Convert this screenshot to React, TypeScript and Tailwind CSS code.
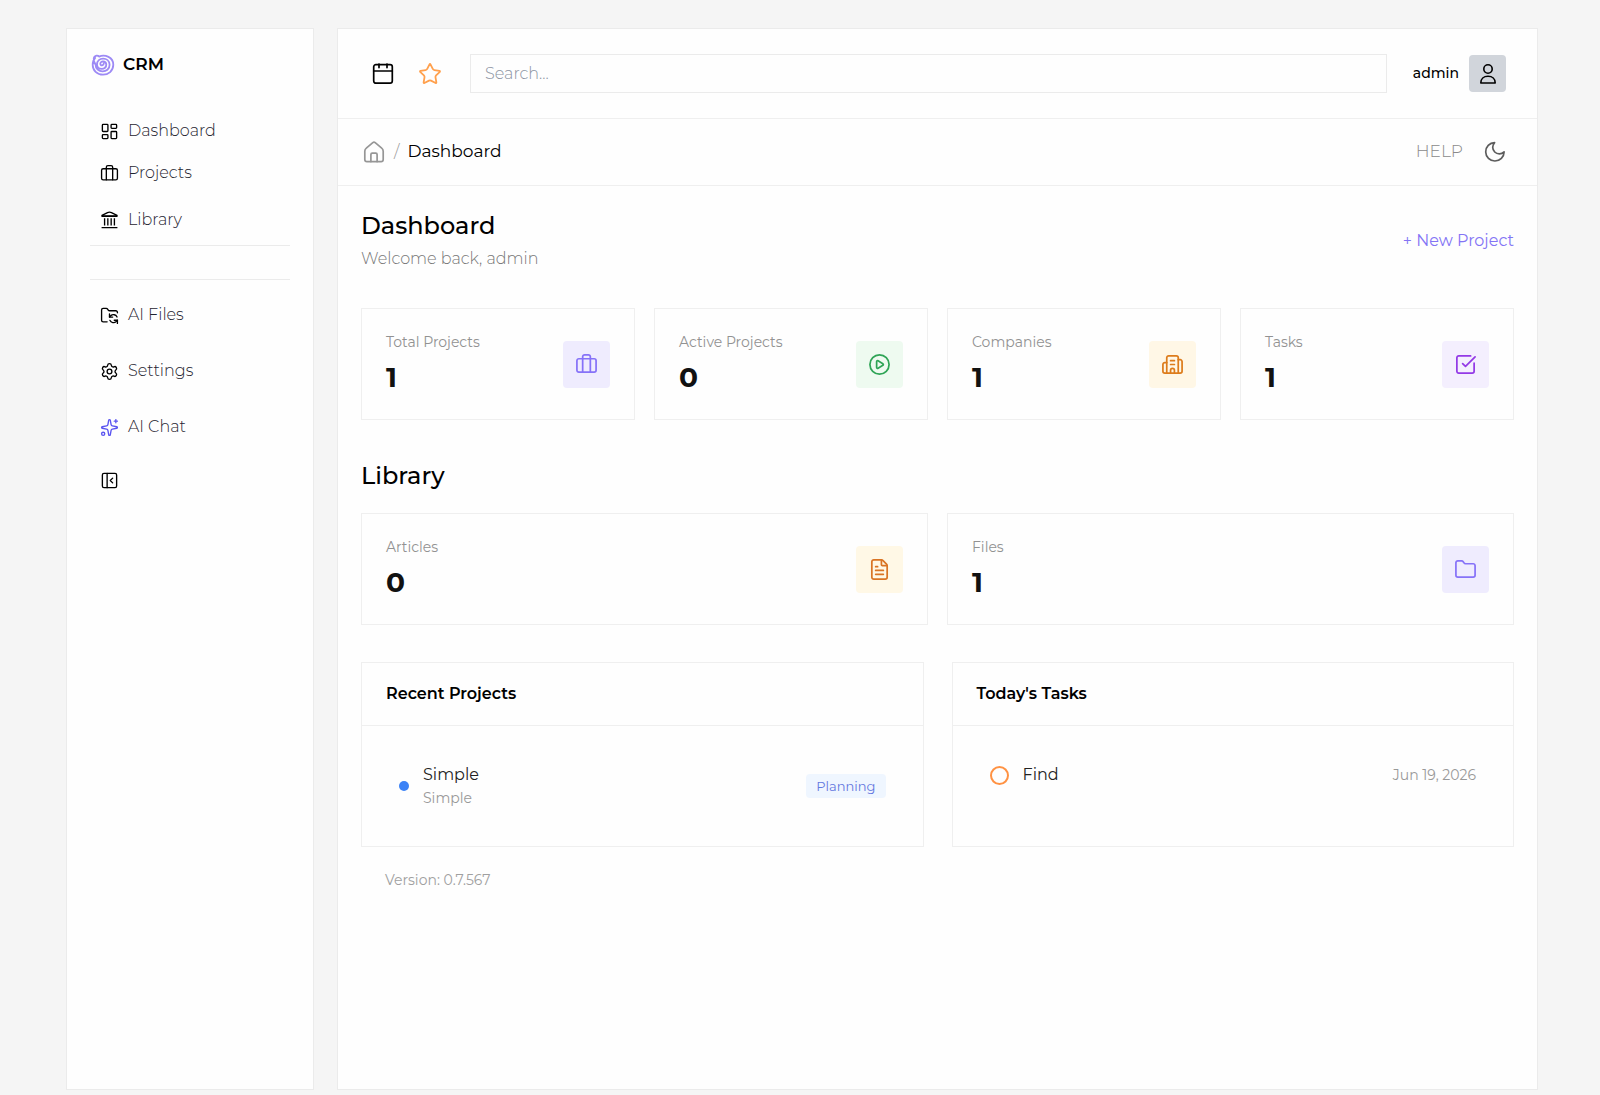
import type { ReactNode } from 'react';
import {
  Briefcase,
  Building2,
  CirclePlay,
  FileText,
  Folder,
  FolderSync,
  LayoutDashboard,
  PanelLeftClose,
  Settings,
  Sparkles,
  SquareCheckBig,
  Star,
} from 'lucide-react';

function SpiralLogo() {
  return (
    <svg viewBox="0 0 24 24" className="size-6 text-[#9d8af5]" fill="none" stroke="currentColor" strokeWidth="1.8" strokeLinecap="round" strokeLinejoin="round" aria-hidden="true">
      <path d="M12.8 10.500C12.800 12.500 9.600 13.200 9.300 11C9 7.800 14.800 7.400 15.300 11.300C15.600 17.300 6.300 17.600 6 11.500C5.800 3.600 18.300 3.600 18.600 11.700C18.600 20.800 4.400 20.300 4.600 11.500" />
      <path d="M4.6 11.500C1.500 7 2.400 3.200 5.600 2.600C6.800 2.500 7.600 3 8 3.600C14 .8 22.400 4.500 22.300 11.800C22.200 18 17.500 21.700 12 21.700C6 21.700 1.700 17.400 1.700 12C1.700 9 2.500 6.600 4.200 4.900" />
    </svg>
  );
}

function BankIcon() {
  return (
    <svg viewBox="0 0 24 24" className="size-[19px]" fill="none" stroke="currentColor" strokeWidth="1.7" strokeLinejoin="round" aria-hidden="true">
      <path d="M2.5 6.8 9.5 3.2Q12 2 14.5 3.2L21.5 6.8V8H2.5Z" />
      <path d="M2.5 7.4h19M5.8 10.500v9M9.900 10.500v9M14.100 10.500v9M18.200 10.500v9M2 22.300h20" />
    </svg>
  );
}

function CalendarIcon() {
  return (
    <svg viewBox="0 0 24 24" className="size-6" fill="none" stroke="currentColor" strokeWidth="1.7" strokeLinecap="round" strokeLinejoin="round" aria-hidden="true">
      <rect x="2.7" y="2.6" width="18.6" height="18.6" rx="2.2" />
      <path d="M2.7 9h18.600M8 2v3.600M16 2v3.600" />
    </svg>
  );
}

function HomeIcon() {
  return (
    <svg viewBox="0 0 24 24" className="size-6 text-[#969696]" fill="none" stroke="currentColor" strokeWidth="1.7" strokeLinecap="round" strokeLinejoin="round" aria-hidden="true">
      <path d="M2.800 11.200c0-1.300.5-2.200 1.500-3L10.800 2.600c.8-.7 1.600-.7 2.400 0l6.500 5.600c1 .8 1.500 1.700 1.500 3v8.300c0 1.300-.8 2.100-2.100 2.100H4.900c-1.300 0-2.100-.8-2.100-2.100Z" />
      <path d="M8.900 21.600v-7.200c0-.8.500-1.300 1.300-1.300h3.600c.8 0 1.300.5 1.300 1.300v7.200" />
    </svg>
  );
}

function MoonIcon() {
  return (
    <svg viewBox="0 0 24 24" className="size-6 text-[#5c5c5c]" fill="none" stroke="currentColor" strokeWidth="1.7" strokeLinecap="round" strokeLinejoin="round" aria-hidden="true">
      <path d="M11.600 2.600a6.400 6.400 0 0 0 9.500 9.300 9.200 9.200 0 1 1-9.500-9.300Z" />
    </svg>
  );
}

function PersonIcon() {
  return (
    <svg viewBox="0 0 24 24" className="size-6" fill="none" stroke="currentColor" strokeWidth="1.6" strokeLinecap="round" strokeLinejoin="round" aria-hidden="true">
      <circle cx="12" cy="7" r="4.200" />
      <path d="M4.800 21c0-4 2.900-6.700 7.200-6.700s7.200 2.700 7.200 6.700Z" />
    </svg>
  );
}

function NavLink({ icon, label, className }: { icon: ReactNode; label: string; className: string }) {
  return (
    <a href="#" className={`flex items-center gap-[9px] px-[10px] text-[16px] font-light text-[#1f2430] ${className}`}>
      <span className="text-black">{icon}</span>
      {label}
    </a>
  );
}

function StatCard({ label, value, icon, tone }: { label: string; value: number; icon: ReactNode; tone: string }) {
  return (
    <div className="flex items-center justify-between border border-[#efefef] px-6 py-[23px]">
      <div>
        <p className="mb-[9px] text-[14px] leading-5 text-[#929292]">{label}</p>
        <p className="mb-[3px] text-[28px] leading-8 font-bold text-[#111]">{value}</p>
      </div>
      <div className={`flex size-[47px] items-center justify-center rounded ${tone}`}>{icon}</div>
    </div>
  );
}

function Panel({ title, children }: { title: string; children: ReactNode }) {
  return (
    <section className="border border-[#efefef]">
      <h3 className="border-b border-[#efefef] px-6 py-[19px] text-[16px] leading-6 font-semibold text-black">{title}</h3>
      <div className="p-[37px]">{children}</div>
    </section>
  );
}

export default function App() {
  return (
    <div className="flex min-h-screen gap-[23px] bg-[#f5f5f5] pt-7 pr-[62px] pb-[5px] pl-[66px] font-[Montserrat,Inter,sans-serif] text-black">
      <aside className="w-[248px] shrink-0 border border-[#ebebeb] bg-[#fefefe] px-[23px] pt-6">
        <div className="flex h-6 items-center gap-2 pl-px">
          <SpiralLogo />
          <span className="text-[17px] font-semibold">CRM</span>
        </div>
        <nav className="mt-[33px]" aria-label="Main">
          <NavLink className="h-[42px]" icon={<LayoutDashboard className="size-[19px]" strokeWidth={1.7} />} label="Dashboard" />
          <NavLink className="h-[42px]" icon={<Briefcase className="size-[19px]" strokeWidth={1.7} />} label="Projects" />
          <NavLink className="h-[52px] border-b border-[#ebebeb]" icon={<BankIcon />} label="Library" />
          <div className="mt-[33px] border-t border-[#ebebeb] pt-[7px]">
            <NavLink className="h-14" icon={<FolderSync className="size-[19px]" strokeWidth={1.7} />} label="AI Files" />
            <NavLink className="h-14" icon={<Settings className="size-[19px]" strokeWidth={1.7} />} label="Settings" />
            <NavLink className="h-14" icon={<Sparkles className="size-[19px] text-[#5b55f0]" strokeWidth={1.7} />} label="AI Chat" />
          </div>
        </nav>
        <button type="button" aria-label="Collapse sidebar" className="flex h-[51px] items-center px-[10px]">
          <PanelLeftClose className="size-[19px]" strokeWidth={1.7} />
        </button>
      </aside>

      <div className="min-w-0 flex-1 border border-[#ebebeb] bg-[#fefefe]">
        <header className="flex h-[90px] items-center border-b border-[#efefef] pr-[31px] pl-[33px]">
          <button type="button" aria-label="Calendar">
            <CalendarIcon />
          </button>
          <button type="button" aria-label="Favorites" className="ml-[23px]">
            <Star className="size-6 text-[#ffa04d]" strokeWidth={1.8} />
          </button>
          <input
            type="search"
            aria-label="Search"
            placeholder="Search..."
            className="ml-7 h-[39px] min-w-0 flex-1 border border-[#ebebeb] px-[14px] text-[16px] font-light placeholder:text-[#8b93a1]"
          />
          <button type="button" className="ml-[26px] flex items-center gap-[10px] text-[14px] font-medium">
            admin
            <span className="flex size-[37px] items-center justify-center rounded bg-[#d1d5db]">
              <PersonIcon />
            </span>
          </button>
        </header>

        <div className="flex h-[67px] items-center justify-between border-b border-[#efefef] pr-[30px] pl-6">
          <nav aria-label="Breadcrumb" className="flex items-center gap-2 text-[17px]">
            <a href="#" aria-label="Home">
              <HomeIcon />
            </a>
            <span className="font-light text-[#9a9a9a]">/</span>
            <span>Dashboard</span>
          </nav>
          <div className="flex items-center gap-5">
            <a href="#" className="text-[17px] font-light text-[#8a8a8a]">
              HELP
            </a>
            <button type="button" aria-label="Toggle dark mode">
              <MoonIcon />
            </button>
          </div>
        </div>

        <main className="px-[23px] pt-6">
          <div className="flex items-center justify-between">
            <div>
              <h1 className="text-[24px] leading-8 font-medium">Dashboard</h1>
              <p className="mt-[5px] text-[16px] leading-6 font-light text-[#777]">Welcome back, admin</p>
            </div>
            <button type="button" className="text-[16px] text-[#8474f5]">
              + New Project
            </button>
          </div>

          <div className="mt-[37px] grid grid-cols-4 gap-[19px]">
            <StatCard label="Total Projects" value={1} tone="bg-[#efecfe] text-[#8672f8]" icon={<Briefcase className="size-[23px]" strokeWidth={1.8} />} />
            <StatCard label="Active Projects" value={0} tone="bg-[#eefaf0] text-[#2fa456]" icon={<CirclePlay className="size-[23px]" strokeWidth={1.8} />} />
            <StatCard label="Companies" value={1} tone="bg-[#fff7e6] text-[#dd7c1c]" icon={<Building2 className="size-[23px]" strokeWidth={1.8} />} />
            <StatCard label="Tasks" value={1} tone="bg-[#f4effe] text-[#9339e6]" icon={<SquareCheckBig className="size-[23px]" strokeWidth={1.8} />} />
          </div>

          <h2 className="mt-10 text-[24px] leading-8 font-medium">Library</h2>
          <div className="mt-[21px] grid grid-cols-2 gap-[19px]">
            <StatCard label="Articles" value={0} tone="bg-[#fff8e6] text-[#d97424]" icon={<FileText className="size-[23px]" strokeWidth={1.8} />} />
            <StatCard label="Files" value={1} tone="bg-[#efecfe] text-[#8672f8]" icon={<Folder className="size-[23px]" strokeWidth={1.8} />} />
          </div>

          <div className="mt-[37px] grid grid-cols-2 gap-7">
            <Panel title="Recent Projects">
              <div className="flex items-center">
                <span className="size-[10px] rounded-full bg-[#3b82f6]" />
                <div className="ml-[14px]">
                  <p className="text-[16px] leading-6 text-[#222]">Simple</p>
                  <p className="text-[14px] leading-[22px] text-[#999]">Simple</p>
                </div>
                <span className="ml-auto rounded bg-[#eff6ff] px-[10px] py-[2px] text-[13px] leading-5 text-[#6478e0]">Planning</span>
              </div>
            </Panel>
            <Panel title="Today's Tasks">
              <div className="flex items-center">
                <span className="size-[19px] rounded-full border-2 border-[#ff9243]" />
                <p className="ml-[14px] text-[16px] leading-6 text-[#222]">Find</p>
                <span className="ml-auto text-[14px] text-[#999]">Jun 19, 2026</span>
              </div>
            </Panel>
          </div>

          <p className="mt-[23px] px-6 text-[14px] leading-5 text-[#a0a0a0]">Version: 0.7.567</p>
        </main>
      </div>
    </div>
  );
}
